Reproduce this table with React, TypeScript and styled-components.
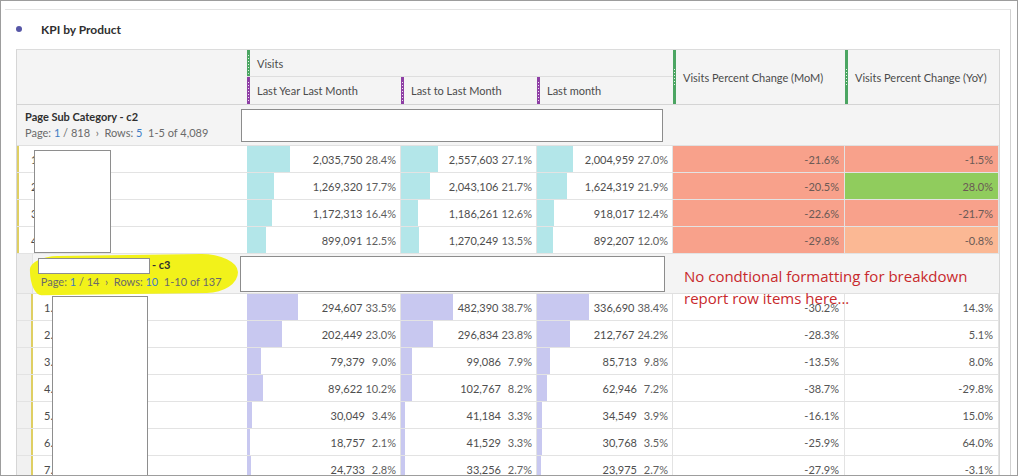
import React from 'react';
import styled, { createGlobalStyle } from 'styled-components';

const GlobalStyle = createGlobalStyle`
  html, body { margin: 0; padding: 0; background: #fff; }
  body { font-family: Lato, "Noto Sans", sans-serif; color: #4b4b4b; }
  * { box-sizing: border-box; }
`;

const COLS = '230px 154px 136px 136px 172px 154px';

const Frame = styled.div`
  width: 1018px;
  height: 476px;
  border: 1px solid #9d9d9d;
  overflow: hidden;
  background: #fff;
`;

const Panel = styled.div`
  margin: 8px 6px 0 4px;
  height: 480px;
  border-top: 1px solid #e4e4e4;
  border-right: 1px solid #d2d2d2;
  padding-left: 11px;
`;

const TitleRow = styled.div`
  height: 39px;
  display: flex;
  align-items: center;
  gap: 19px;
  padding-bottom: 1px;
`;

const Dot = styled.span`
  width: 6px;
  height: 6px;
  border-radius: 50%;
  background: #5656a6;
`;

const Title = styled.h1`
  margin: 0;
  font-size: 12px;
  font-weight: 700;
  color: #2f2f2f;
`;

const Table = styled.div`
  position: relative;
  width: 984px;
  border-top: 1px solid #dcdcdc;
  border-left: 1px solid #d6d6d6;
  border-right: 1px solid #d6d6d6;
  font-size: 11px;
`;

const Header = styled.div`
  display: grid;
  grid-template-columns: ${COLS};
  grid-template-rows: 27px 27px;
  background: #f4f4f4;
  border-bottom: 1px solid #d4d4d4;
`;

const Corner = styled.div`
  grid-column: 1;
  grid-row: 1 / 3;
`;

const HeadCell = styled.div<{ $col: string; $row: string; $line?: boolean }>`
  grid-column: ${(p) => p.$col};
  grid-row: ${(p) => p.$row};
  display: flex;
  align-items: center;
  gap: 7px;
  color: #4b4b4b;
  border-bottom: ${(p) => (p.$line ? '1px solid #dedede' : 'none')};
`;

const Marker = styled.span<{ $color: string; $dots?: string }>`
  align-self: stretch;
  flex: none;
  width: 3px;
  background:
    repeating-linear-gradient(to bottom, transparent 0 2px, rgba(255, 255, 255, 0.85) 2px 3px)
      center / 1px ${(p) => p.$dots ?? '80%'} no-repeat,
    ${(p) => p.$color};
`;

const DimRow = styled.div<{ $tall: number }>`
  position: relative;
  display: flex;
  align-items: center;
  height: ${(p) => p.$tall}px;
  background: #f4f4f4;
  border-bottom: 1px solid #e0e0e0;
`;

const DimGutter = styled.div`
  align-self: stretch;
  width: 16px;
  flex: none;
  background: #eeeeee;
  border-right: 1px solid #e2e2e2;
`;

const DimLabel = styled.div<{ $pad: number; $w: number }>`
  position: relative;
  z-index: 1;
  padding-left: ${(p) => p.$pad}px;
  width: ${(p) => p.$w}px;
  flex: none;
  line-height: 16px;
`;

const DimName = styled.div`
  font-weight: 700;
  color: #2f2f2f;
  white-space: nowrap;
`;

const Pager = styled.div`
  color: #6a6a6a;
  white-space: nowrap;
`;

const Link = styled.span`
  color: #3f7cc4;
`;

const Redact = styled.span<{ $w: number; $h: number }>`
  display: inline-block;
  vertical-align: middle;
  width: ${(p) => p.$w}px;
  height: ${(p) => p.$h}px;
  background: #fff;
  border: 1px solid #8e8e8e;
  margin-right: 2px;
`;

const SearchBox = styled.div<{ $w: number; $h: number }>`
  position: relative;
  z-index: 1;
  width: ${(p) => p.$w}px;
  height: ${(p) => p.$h}px;
  background: #fff;
  border: 1px solid #8c8c8c;
`;

const Highlight = styled.div`
  position: absolute;
  left: 13px;
  top: 1px;
  width: 208px;
  height: 39px;
  background: #f2f21a;
  border-radius: 30px 40px 34px 12px / 14px 20px 22px 26px;
  transform: rotate(-0.8deg);
`;

const Row = styled.div`
  display: grid;
  grid-template-columns: ${COLS};
  height: 27px;
  border-bottom: 1px solid #e3e3e3;
`;

const LabelCell = styled.div`
  display: flex;
  align-items: center;
  color: #4b4b4b;
`;

const Gutter = styled.span<{ $w: number }>`
  align-self: stretch;
  flex: none;
  width: ${(p) => p.$w}px;
  background: #f1f1f1;
  border-right: 2px solid #dfcf63;
`;

const RowNum = styled.span<{ $pad: number }>`
  padding-left: ${(p) => p.$pad}px;
`;

const MetricCell = styled.div`
  display: flex;
  border-right: 1px solid #e3e3e3;
`;

const Bar = styled.span<{ $color: string }>`
  flex: none;
  background: ${(p) => p.$color};
`;

const Value = styled.span`
  margin-left: auto;
  align-self: center;
  display: flex;
  gap: 3px;
  padding-right: 4px;
  color: #4e4e4e;
  white-space: nowrap;
`;

const Pct = styled.span`
  min-width: 28px;
  text-align: right;
  color: #5e5e5e;
`;

const ChangeCell = styled.div<{ $bg?: string }>`
  display: flex;
  align-items: center;
  justify-content: flex-end;
  padding-right: 5px;
  background: ${(p) => p.$bg ?? '#fff'};
  color: ${(p) => (p.$bg ? '#6b5a55' : '#555')};
  border-right: 1px solid #e3e3e3;
`;

const Cover = styled.div<{ $x: number; $y: number; $w: number; $h: number }>`
  position: absolute;
  left: ${(p) => p.$x}px;
  top: ${(p) => p.$y}px;
  width: ${(p) => p.$w}px;
  height: ${(p) => p.$h}px;
  background: #fff;
  border: 1px solid #8e8e8e;
`;

const Note = styled.div`
  position: absolute;
  left: 667px;
  top: 215px;
  font-family: "Open Sans", "Noto Sans", sans-serif;
  font-size: 15px;
  line-height: 22px;
  color: #c8292c;
  z-index: 2;
`;

type Metric = [string, number];
type DataRow = { m: Metric[]; mom: string; yoy: string; momBg?: string; yoyBg?: string };

const SALMON = '#f8a18b';
const GREEN = '#90cc5d';
const PEACH = '#fbb894';
const CYAN = '#b3e6e9';
const LAV = '#c8c8f0';
const WIDTHS = [153, 135, 135];

const topRows: DataRow[] = [
  { m: [['2,035,750', 28.4], ['2,557,603', 27.1], ['2,004,959', 27.0]], mom: '-21.6%', yoy: '-1.5%', momBg: SALMON, yoyBg: SALMON },
  { m: [['1,269,320', 17.7], ['2,043,106', 21.7], ['1,624,319', 21.9]], mom: '-20.5%', yoy: '28.0%', momBg: SALMON, yoyBg: GREEN },
  { m: [['1,172,313', 16.4], ['1,186,261', 12.6], ['918,017', 12.4]], mom: '-22.6%', yoy: '-21.7%', momBg: SALMON, yoyBg: SALMON },
  { m: [['899,091', 12.5], ['1,270,249', 13.5], ['892,207', 12.0]], mom: '-29.8%', yoy: '-0.8%', momBg: SALMON, yoyBg: PEACH },
];

const subRows: DataRow[] = [
  { m: [['294,607', 33.5], ['482,390', 38.7], ['336,690', 38.4]], mom: '-30.2%', yoy: '14.3%' },
  { m: [['202,449', 23.0], ['296,834', 23.8], ['212,767', 24.2]], mom: '-28.3%', yoy: '5.1%' },
  { m: [['79,379', 9.0], ['99,086', 7.9], ['85,713', 9.8]], mom: '-13.5%', yoy: '8.0%' },
  { m: [['89,622', 10.2], ['102,767', 8.2], ['62,946', 7.2]], mom: '-38.7%', yoy: '-29.8%' },
  { m: [['30,049', 3.4], ['41,184', 3.3], ['34,549', 3.9]], mom: '-16.1%', yoy: '15.0%' },
  { m: [['18,757', 2.1], ['41,529', 3.3], ['30,768', 3.5]], mom: '-25.9%', yoy: '64.0%' },
  { m: [['24,733', 2.8], ['33,256', 2.7], ['23,975', 2.7]], mom: '-27.9%', yoy: '-3.1%' },
];

function DataLine({ row, index, sub }: { row: DataRow; index: number; sub: boolean }) {
  return (
    <Row>
      <LabelCell>
        <Gutter $w={sub ? 16 : 0} />
        <RowNum $pad={sub ? 11 : 12}>{sub ? `${index + 1}.` : index + 1}</RowNum>
      </LabelCell>
      {row.m.map(([v, p], i) => (
        <MetricCell key={i}>
          <Bar $color={sub ? LAV : CYAN} style={{ width: `${Math.round((WIDTHS[i] * p) / 100)}px` }} />
          <Value>
            {v}
            <Pct>{p.toFixed(1)}%</Pct>
          </Value>
        </MetricCell>
      ))}
      <ChangeCell $bg={row.momBg}>{row.mom}</ChangeCell>
      <ChangeCell $bg={row.yoyBg}>{row.yoy}</ChangeCell>
    </Row>
  );
}

export default function App() {
  return (
    <>
      <GlobalStyle />
      <Frame>
        <Panel>
          <TitleRow>
            <Dot />
            <Title>KPI by Product</Title>
          </TitleRow>
          <Table>
            <Header>
              <Corner />
              <HeadCell $col="2 / 5" $row="1" $line>
                <Marker $color="#4ba562" />
                Visits
              </HeadCell>
              <HeadCell $col="2" $row="2">
                <Marker $color="#8e3fa5" />
                Last Year Last Month
              </HeadCell>
              <HeadCell $col="3" $row="2">
                <Marker $color="#8e3fa5" />
                Last to Last Month
              </HeadCell>
              <HeadCell $col="4" $row="2">
                <Marker $color="#8e3fa5" />
                Last month
              </HeadCell>
              <HeadCell $col="5" $row="1 / 3">
                <Marker $color="#4ba562" $dots="36%" />
                Visits Percent Change (MoM)
              </HeadCell>
              <HeadCell $col="6" $row="1 / 3">
                <Marker $color="#4ba562" $dots="36%" />
                Visits Percent Change (YoY)
              </HeadCell>
            </Header>

            <DimRow $tall={41}>
              <DimLabel $pad={8} $w={224}>
                <DimName>Page Sub Category - c2</DimName>
                <Pager>
                  Page: <Link>1</Link> / 818 &nbsp;›&nbsp; Rows: <Link>5</Link>&nbsp; 1-5 of 4,089
                </Pager>
              </DimLabel>
              <SearchBox $w={422} $h={33} />
            </DimRow>

            {topRows.map((r, i) => (
              <DataLine key={i} row={r} index={i} sub={false} />
            ))}

            <DimRow $tall={40}>
              <Highlight />
              <DimGutter />
              <DimLabel $pad={5} $w={207}>
                <DimName>
                  <Redact $w={112} $h={16} />- c3
                </DimName>
                <Pager>
                  &nbsp;Page: <Link>1</Link> / 14 &nbsp;›&nbsp; Rows: <Link>10</Link>&nbsp; 1-10 of 137
                </Pager>
              </DimLabel>
              <SearchBox $w={425} $h={36} />
            </DimRow>

            {subRows.map((r, i) => (
              <DataLine key={i} row={r} index={i} sub />
            ))}

            <Cover $x={17} $y={100} $w={77} $h={103} />
            <Cover $x={35} $y={246} $w={96} $h={220} />
            <Note>
              No condtional formatting for breakdown
              <br />
              report row items here...
            </Note>
          </Table>
        </Panel>
      </Frame>
    </>
  );
}
